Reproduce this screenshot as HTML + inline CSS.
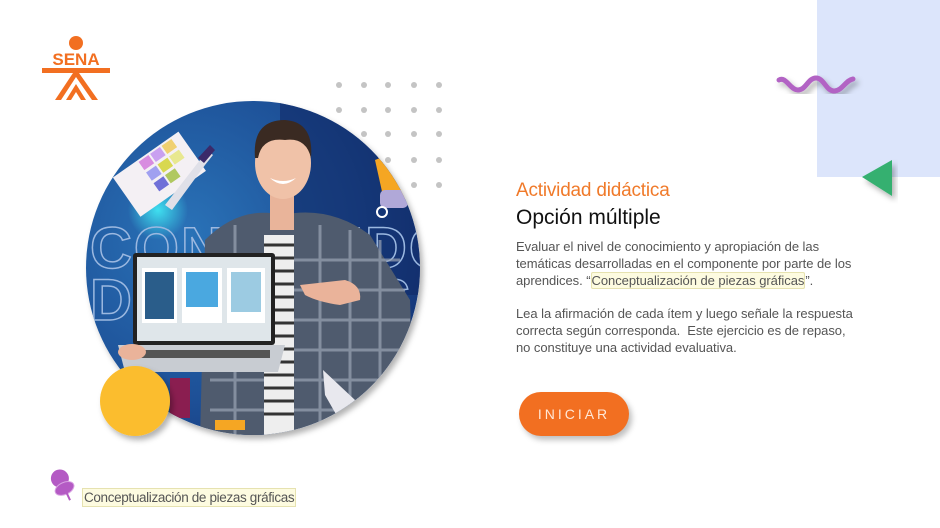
<!DOCTYPE html>
<html><head><meta charset="utf-8"><style>
html,body{margin:0;padding:0;background:#fff;}
body{width:940px;height:528px;position:relative;overflow:hidden;font-family:"Liberation Sans",sans-serif;}
.t1{position:absolute;left:516px;top:180px;font-size:19px;color:#f07a2a;letter-spacing:-0.2px;}
.t2{position:absolute;left:516px;top:206px;font-size:21px;color:#111;}
.p{position:absolute;left:516px;font-size:13px;line-height:17px;color:#555;width:360px;letter-spacing:-0.05px;}
.hl{background:#fdfbe0;border:1px solid #e6e2b0;border-radius:2px;color:#555;}
.btn{position:absolute;left:519px;top:392px;width:110px;height:44px;border-radius:22px;background:#f26f21;font-size:14px;letter-spacing:3px;text-align:center;line-height:44px;box-shadow:3px 4px 6px rgba(0,0,0,.25);color:#ffe7d6;}
.foot{position:absolute;left:82px;top:488px;font-size:13.5px;color:#555;background:#fdfbe0;border:1px solid #e6e2b0;padding:0 1px;line-height:17px;letter-spacing:-0.35px;}
</style></head><body>
<svg width="940" height="528" style="position:absolute;left:0;top:0">
<defs>
<clipPath id="c"><circle cx="253" cy="268" r="167"/></clipPath>
<radialGradient id="bg" cx="0.3" cy="0.4" r="0.8"><stop offset="0" stop-color="#2a73b8"/><stop offset="0.6" stop-color="#1d4f96"/><stop offset="1" stop-color="#132e6e"/></radialGradient>
<radialGradient id="glow" cx="0.5" cy="0.5" r="0.5"><stop offset="0" stop-color="#3fe0f0"/><stop offset="1" stop-color="#3fe0f0" stop-opacity="0"/></radialGradient>
<filter id="sh" x="-20%" y="-20%" width="140%" height="140%"><feDropShadow dx="3" dy="4" stdDeviation="3" flood-opacity="0.3"/></filter>
</defs>
<rect x="817" y="0" width="123" height="177" fill="#dce5fb"/>
<path d="M779,80 C786,76 790,90 798,90 C806,90 808,78 816,78 C824,78 826,91 834,91 C842,91 846,80 853,79" stroke="#b264c4" stroke-width="5" fill="none" stroke-linecap="round" filter="url(#sh)"/>
<polygon points="862,177 892,160 892,196" fill="#35b070" filter="url(#sh)"/>
<g fill="#c4c4c4">
<circle cx="339" cy="85" r="3"/><circle cx="364" cy="85" r="3"/><circle cx="388" cy="85" r="3"/><circle cx="414" cy="85" r="3"/><circle cx="439" cy="85" r="3"/>
<circle cx="339" cy="110" r="3"/><circle cx="364" cy="110" r="3"/><circle cx="388" cy="110" r="3"/><circle cx="414" cy="110" r="3"/><circle cx="439" cy="110" r="3"/>
<circle cx="364" cy="134" r="3"/><circle cx="388" cy="134" r="3"/><circle cx="414" cy="134" r="3"/><circle cx="439" cy="134" r="3"/>
<circle cx="388" cy="160" r="3"/><circle cx="414" cy="160" r="3"/><circle cx="439" cy="160" r="3"/>
<circle cx="414" cy="185" r="3"/><circle cx="439" cy="185" r="3"/>
</g>
<circle cx="253" cy="268" r="167" fill="#fff" filter="url(#sh)"/>
<g clip-path="url(#c)">
<rect x="80" y="95" width="350" height="350" fill="url(#bg)"/>
<rect x="280" y="95" width="150" height="200" fill="#102a66" opacity="0.6"/>
<circle cx="158" cy="210" r="30" fill="url(#glow)"/>
<text x="90" y="268" font-size="58" font-weight="bold" fill="none" stroke="#9bb8e0" stroke-width="1.5" letter-spacing="2">CONTENIDOS</text>
<text x="90" y="320" font-size="58" font-weight="bold" fill="none" stroke="#9bb8e0" stroke-width="1.5" letter-spacing="2">DIGITALES</text>
<g transform="rotate(-35 160 175)">
<rect x="120" y="150" width="80" height="48" fill="#f4f0f4"/>
<rect x="150" y="152" width="12" height="10" fill="#d88ce0"/><rect x="164" y="152" width="12" height="10" fill="#c9a0f0"/><rect x="178" y="152" width="12" height="10" fill="#f0d070"/>
<rect x="150" y="165" width="12" height="10" fill="#a0a0f0"/><rect x="164" y="165" width="12" height="10" fill="#d8d850"/><rect x="178" y="165" width="12" height="10" fill="#e8e890"/>
<rect x="150" y="178" width="12" height="10" fill="#7070d8"/><rect x="164" y="178" width="12" height="10" fill="#b0c860"/>
</g>
<path d="M165,205 L200,160 L207,150 L213,155 L205,165 L172,210 Z" fill="#e0e0e8"/>
<path d="M198,158 L210,145 L215,150 L204,163Z" fill="#3b2a6a"/>
<path d="M375,160 L400,150 L405,200 L385,205Z" fill="#f5a623"/>
<rect x="380" y="190" width="28" height="18" rx="5" fill="#b0a8d8"/>
<circle cx="382" cy="212" r="5" fill="none" stroke="#fff" stroke-width="2"/>
<path d="M205,240 Q240,205 282,215 Q330,205 370,235 L410,300 L415,440 L200,440Z" fill="#4f5b6e"/>
<g stroke="#9aa4b4" stroke-width="3" opacity="0.7">
<line x1="215" y1="260" x2="400" y2="260"/><line x1="210" y1="290" x2="405" y2="290"/><line x1="210" y1="320" x2="410" y2="320"/><line x1="210" y1="350" x2="410" y2="350"/><line x1="210" y1="380" x2="410" y2="380"/><line x1="210" y1="410" x2="410" y2="410"/>
<line x1="235" y1="225" x2="235" y2="440"/><line x1="320" y1="225" x2="320" y2="440"/><line x1="350" y1="230" x2="350" y2="440"/><line x1="380" y1="240" x2="380" y2="440"/>
</g>
<rect x="264" y="235" width="30" height="205" fill="#eee"/>
<g stroke="#333" stroke-width="3"><line x1="264" y1="245" x2="294" y2="245"/><line x1="264" y1="258" x2="294" y2="258"/><line x1="264" y1="271" x2="294" y2="271"/><line x1="264" y1="284" x2="294" y2="284"/><line x1="264" y1="297" x2="294" y2="297"/><line x1="264" y1="310" x2="294" y2="310"/><line x1="264" y1="323" x2="294" y2="323"/><line x1="264" y1="336" x2="294" y2="336"/><line x1="264" y1="349" x2="294" y2="349"/><line x1="264" y1="362" x2="294" y2="362"/><line x1="264" y1="375" x2="294" y2="375"/><line x1="264" y1="388" x2="294" y2="388"/><line x1="264" y1="401" x2="294" y2="401"/><line x1="264" y1="414" x2="294" y2="414"/></g>
<rect x="270" y="195" width="24" height="35" fill="#e9b49a"/>
<ellipse cx="283" cy="163" rx="28" ry="36" fill="#f0c2a8"/>
<path d="M255,158 Q252,120 285,120 Q314,122 311,158 Q306,137 285,140 Q262,137 258,158Z" fill="#3a2a22"/>
<path d="M270,178 Q283,190 296,178 Q283,184 270,178Z" fill="#fff"/>
<path d="M300,285 L345,280 Q362,285 360,300 L340,305 Q318,302 305,295Z" fill="#eab39a"/>
<rect x="133" y="253" width="142" height="92" rx="3" fill="#222"/>
<rect x="137" y="257" width="134" height="84" fill="#dfe6ea"/>
<rect x="142" y="268" width="35" height="55" fill="#fff"/><rect x="145" y="272" width="29" height="47" fill="#2a5d8a"/>
<rect x="182" y="268" width="40" height="55" fill="#fff"/><rect x="186" y="272" width="32" height="35" fill="#4aa8e0"/>
<rect x="227" y="268" width="38" height="55" fill="#fff"/><rect x="231" y="272" width="30" height="40" fill="#9ccbe2"/>
<path d="M118,345 L285,345 L278,372 L125,372Z" fill="#c8ccd2"/>
<rect x="140" y="350" width="130" height="8" fill="#555"/>
<ellipse cx="132" cy="352" rx="14" ry="8" fill="#eab39a"/>
<path d="M323,370 L355,400 L345,430 L325,395Z" fill="#e8e8ee"/>
<rect x="170" y="378" width="20" height="40" fill="#8a1e50"/>
<rect x="215" y="420" width="30" height="10" fill="#f5a623"/>
</g>
<circle cx="135" cy="401" r="35" fill="#fbbd2e" filter="url(#sh)"/>
<circle cx="76" cy="43" r="7" fill="#f26f21"/>
<text x="76" y="65" font-size="17" font-weight="bold" fill="#f26f21" text-anchor="middle">SENA</text>
<rect x="42" y="68" width="68" height="5" fill="#f26f21"/>
<path d="M55,100 L73,73 L79,73 L98,100 L92,100 L76,77 L61,100Z" fill="#f26f21"/>
<path d="M66,100 L76,84 L86,100 L81,100 L76,92 L71,100Z" fill="#f26f21"/>
<g transform="rotate(-25 62 483)">
<circle cx="62" cy="478" r="9" fill="#b45ac4"/>
<ellipse cx="62" cy="489" rx="10" ry="6" fill="#b45ac4" stroke="#d9a2e3" stroke-width="1"/>
<line x1="62" y1="494" x2="62" y2="502" stroke="#b45ac4" stroke-width="2"/>
</g>
</svg>
<div class="t1">Actividad didáctica</div>
<div class="t2">Opción múltiple</div>
<div class="p" style="top:238px">Evaluar el nivel de conocimiento y apropiación de las<br>temáticas desarrolladas en el componente por parte de los<br>aprendices. “<span class="hl">Conceptualización de piezas gráficas</span>”.</div>
<div class="p" style="top:305px">Lea la afirmación de cada ítem y luego señale la respuesta<br>correcta según corresponda.&nbsp; Este ejercicio es de repaso,<br>no constituye una actividad evaluativa.</div>
<div class="btn">INICIAR</div>
<div class="foot">Conceptualización de piezas gráficas</div>
</body></html>
